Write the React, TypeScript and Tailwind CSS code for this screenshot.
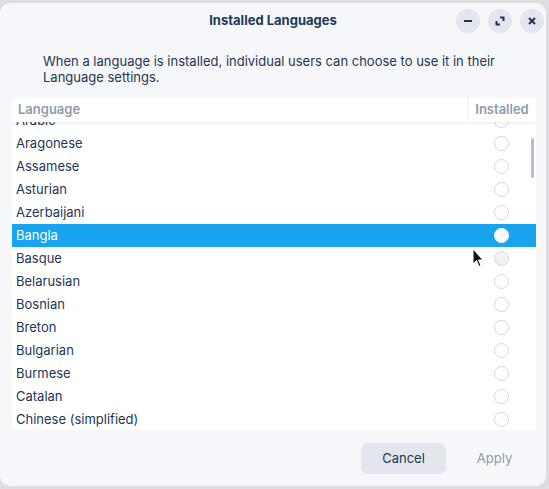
import React from 'react';

const languages = [
  'Arabic',
  'Aragonese',
  'Assamese',
  'Asturian',
  'Azerbaijani',
  'Bangla',
  'Basque',
  'Belarusian',
  'Bosnian',
  'Breton',
  'Bulgarian',
  'Burmese',
  'Catalan',
  'Chinese (simplified)',
  'Chinese (traditional)',
];

const TitleButton: React.FC<{ children: React.ReactNode }> = ({ children }) => (
  <button className="w-6 h-6 rounded-full bg-[#e3e6ed] flex items-center justify-center text-[#1e3656]">
    {children}
  </button>
);

const App: React.FC = () => {
  return (
    <div
      className="w-[549px] h-[489px] bg-[#dcdee2] pt-[3px] overflow-hidden"
      style={{ fontFamily: 'Inter, "Noto Sans", sans-serif' }}
    >
      <div className="relative w-[546px] h-[483px] bg-[#f6f7fb] rounded-[10px] flex flex-col text-[#1f3654]">
        {/* title bar */}
        <div className="relative h-[36px] flex items-center justify-center">
          <span className="text-[13px] font-bold text-[#203a5a]">Installed Languages</span>
          <div className="absolute right-[2px] top-[6px] flex gap-2">
            <TitleButton>
              <svg width="10" height="10" viewBox="0 0 10 10">
                <rect x="1" y="4" width="8" height="2" fill="currentColor" />
              </svg>
            </TitleButton>
            <TitleButton>
              <svg width="10" height="10" viewBox="0 0 10 10" fill="none" stroke="currentColor" strokeWidth="2">
                <path d="M5 1.5h3.5V5" />
                <path d="M1.5 5v3.5H5" />
              </svg>
            </TitleButton>
            <TitleButton>
              <svg width="10" height="10" viewBox="0 0 10 10" stroke="currentColor" strokeWidth="2">
                <path d="M2 2l6 6M8 2l-6 6" />
              </svg>
            </TitleButton>
          </div>
        </div>

        {/* description */}
        <p className="mt-[14px] pl-[43px] pr-4 text-[13px] leading-4 text-[#1f3654]">
          When a language is installed, individual users can choose to use it in their Language settings.
        </p>

        {/* table */}
        <div className="relative mt-[13px] ml-3 mr-[10px] h-[332px] bg-white flex flex-col overflow-hidden">
          <div className="relative z-10 h-6 flex shrink-0 bg-white shadow-[0_2px_3px_rgba(0,0,0,0.06)] text-[13px] font-semibold text-[#8d9cad]">
            <div className="flex-1 flex items-center pl-[6px]">Language</div>
            <div className="w-[69px] flex items-center justify-center border-l border-[#eef0f3]">Installed</div>
          </div>
          <div className="flex-1 overflow-hidden">
            <div className="-mt-[13px]">
              {languages.map((lang) => {
                const selected = lang === 'Bangla';
                const hovered = lang === 'Basque';
                return (
                  <div
                    key={lang}
                    className={`h-[23px] flex items-center text-[13px] ${
                      selected ? 'bg-[#18a4ee] text-white' : 'text-[#1f3654]'
                    }`}
                  >
                    <div className="flex-1 pl-1">{lang}</div>
                    <div className="w-[69px] flex items-center justify-center">
                      <span
                        className={`w-[15px] h-[15px] rounded-full border ${
                          selected
                            ? 'bg-white border-white'
                            : hovered
                            ? 'bg-[#f0f2f5] border-[#d3d9e0]'
                            : 'bg-white border-[#d3d9e0]'
                        }`}
                      />
                    </div>
                  </div>
                );
              })}
            </div>
          </div>
          <div className="absolute right-[2px] top-[40px] w-[3px] h-[40px] rounded-full bg-[#b7bfc9]" />
        </div>

        {/* footer */}
        <div className="mt-[13px] flex justify-end gap-[6px] pr-[9px]">
          <button className="w-[85px] h-[31px] rounded-[7px] bg-[#e3e6ed] text-[13px] text-[#1f3654]">Cancel</button>
          <button className="w-[85px] h-[31px] rounded-[7px] text-[13px] text-[#8d9cad]">Apply</button>
        </div>

        {/* mouse pointer */}
        <svg className="absolute left-[472px] top-[245px]" width="12" height="20" viewBox="0 0 12 20">
          <path d="M1 1v15l3.5-3.5 2.5 6 2-1-2.5-5.5H11z" fill="#111" stroke="#fff" strokeWidth="1" />
        </svg>
      </div>
    </div>
  );
};

export default App;
